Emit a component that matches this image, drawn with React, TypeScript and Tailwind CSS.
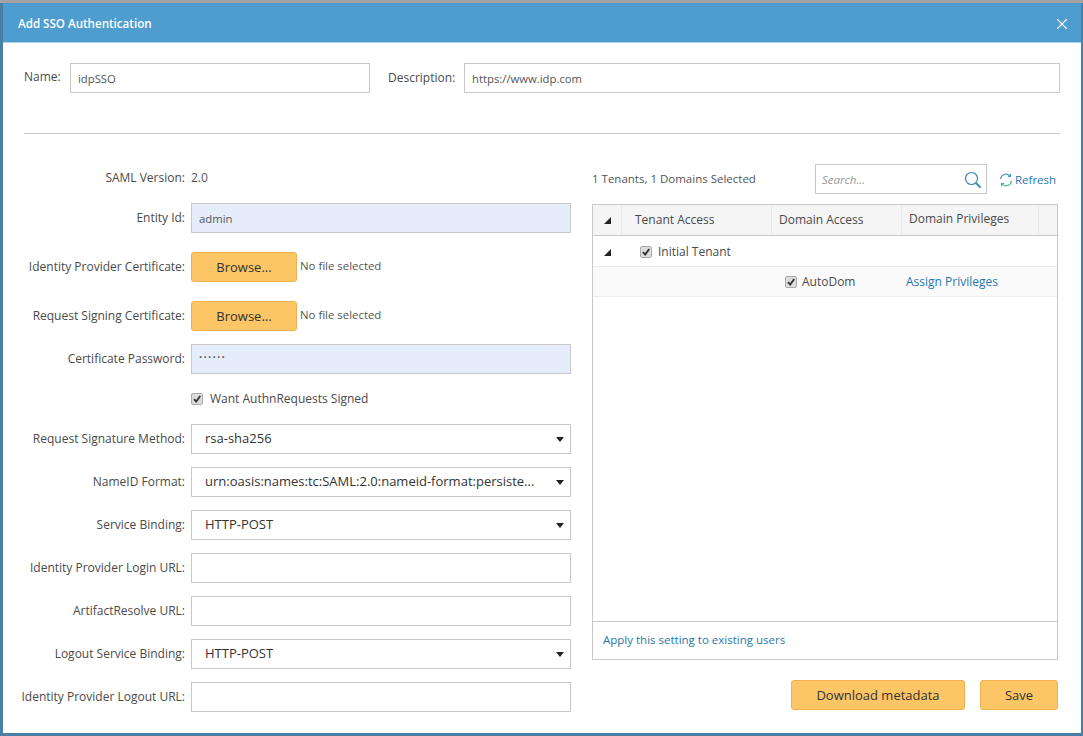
import { X } from 'lucide-react'

const font = { fontFamily: '"Open Sans", sans-serif' }

function Label({ children }: { children: string }) {
  return <label className="w-[188px] shrink-0 text-right pr-[6px] text-[12px] text-[#4a4a4a] whitespace-nowrap">{children}</label>
}

function TextRow({ label, value, filled, dots }: { label: string; value?: string; filled?: boolean; dots?: boolean }) {
  return (
    <div className="flex items-center h-[30px]">
      <Label>{label}</Label>
      <div className={`w-[380px] h-[30px] border border-[#c8c8c8] pl-[7px] flex items-center text-[#555] ${filled ? 'bg-[#e6edfa]' : 'bg-white'} ${dots ? 'text-[12px] font-semibold tracking-[1.2px] pb-[2px]' : 'text-[11.3px] pt-[2px]'}`}>
        {value}
      </div>
    </div>
  )
}

function SelectRow({ label, value }: { label: string; value: string }) {
  return (
    <div className="flex items-center h-[30px]">
      <Label>{label}</Label>
      <div className="w-[380px] h-[30px] border border-[#c8c8c8] bg-white pl-[13px] pr-[6px] flex items-center justify-between text-[13px] text-[#333]">
        <span className="whitespace-nowrap">{value}</span>
        <svg width="8" height="5" viewBox="0 0 8 5"><path d="M0 0h8L4 5z" fill="#222" /></svg>
      </div>
    </div>
  )
}

function FileRow({ label }: { label: string }) {
  return (
    <div className="flex items-center h-[30px]">
      <Label>{label}</Label>
      <Btn className="w-[106px]">Browse...</Btn>
      <span className="ml-[3px] -mt-[2px] text-[11.4px] text-[#555] whitespace-nowrap">No file selected</span>
    </div>
  )
}

function Btn({ children, className }: { children: string; className: string }) {
  return (
    <button className={`h-[30px] pt-[1px] rounded-[3px] border border-[#f0b050] bg-[#fcc566] text-[13px] text-[#333] ${className}`}>{children}</button>
  )
}

function Check() {
  return (
    <span className="w-[12px] h-[12px] rounded-[2px] border border-[#aaa] bg-[#dcdcdc] flex items-center justify-center shrink-0">
      <svg width="10" height="10" viewBox="0 0 10 10"><path d="M2 5.2l2.2 2.4L8.2 2" fill="none" stroke="#333" strokeWidth="1.9" /></svg>
    </span>
  )
}

function Corner() {
  return <svg width="7" height="7" viewBox="0 0 7 7"><path d="M7 0v7H0z" fill="#222" /></svg>
}

export default function App() {
  return (
    <div style={font} className="w-[1083px] h-[736px] overflow-hidden bg-[#a3a3a3] pt-[3px]">
      <div className="h-[733px] bg-white border-l-[3px] border-r-[2px] border-b-[3px] border-[#4a7fa5] flex flex-col">
        <div className="h-[40px] shrink-0 bg-[#4f9ccf] flex items-center justify-between pl-[15px] pr-[10px] pt-[2px] border-b border-[#a9d4ee]">
          <h1 className="text-[11.6px] font-semibold text-white">Add SSO Authentication</h1>
          <X className="w-[18px] h-[18px] text-white" strokeWidth={1.5} />
        </div>

        <div className="pl-[21px] pr-[21px] pt-[20px]">
          <div className="flex items-center h-[30px]">
            <span className="w-[46px] text-[12px] text-[#4a4a4a] -mt-[2px]">Name:</span>
            <div className="w-[300px] h-[30px] border border-[#c8c8c8] pl-[7px] pt-[2px] flex items-center text-[11.3px] text-[#555]">idpSSO</div>
            <span className="ml-[18px] w-[76px] text-[12px] text-[#4a4a4a]">Description:</span>
            <div className="flex-1 h-[30px] border border-[#c8c8c8] pl-[7px] pt-[2px] flex items-center text-[11.3px] text-[#555]">https://www.idp.com</div>
          </div>
          <div className="mt-[40px] border-t border-[#c8c8c8]" />
        </div>

        <div className="flex pt-[31px]">
          <div className="w-[568px] shrink-0 mr-[21px]">
            <div className="flex items-center h-[30px] -mt-[2px]">
              <Label>SAML Version:</Label>
              <span className="text-[12px] text-[#555]">2.0</span>
            </div>
            <div className="mt-[10px]"><TextRow label="Entity Id:" value="admin" filled /></div>
            <div className="mt-[19px]"><FileRow label="Identity Provider Certificate:" /></div>
            <div className="mt-[19px]"><FileRow label="Request Signing Certificate:" /></div>
            <div className="mt-[13px]"><TextRow label="Certificate Password:" value="······" filled dots /></div>
            <div className="flex items-center h-[20px] mt-[15px] pl-[188px]">
              <Check />
              <span className="ml-[7px] text-[12px] text-[#4a4a4a]">Want AuthnRequests Signed</span>
            </div>
            <div className="mt-[15px] flex flex-col gap-[13px]">
              <SelectRow label="Request Signature Method:" value="rsa-sha256" />
              <SelectRow label="NameID Format:" value="urn:oasis:names:tc:SAML:2.0:nameid-format:persiste..." />
              <SelectRow label="Service Binding:" value="HTTP-POST" />
              <TextRow label="Identity Provider Login URL:" />
              <TextRow label="ArtifactResolve URL:" />
              <SelectRow label="Logout Service Binding:" value="HTTP-POST" />
              <TextRow label="Identity Provider Logout URL:" />
            </div>
          </div>

          <div className="w-[466px] shrink-0">
            <div className="flex items-center h-[30px] -mt-[1px]">
              <span className="w-[223px] text-[11.5px] text-[#555] whitespace-nowrap">1 Tenants, 1 Domains Selected</span>
              <div className="w-[172px] h-[30px] border border-[#c8c8c8] pl-[6px] pr-[4px] pt-[2px] flex items-center justify-between">
                <span className="text-[11.5px] italic text-[#999]">Search...</span>
                <svg width="18" height="18" viewBox="0 0 18 18" fill="none">
                  <circle cx="7.5" cy="7.5" r="6" stroke="#3b87b8" strokeWidth="1.2" />
                  <path d="M12 12l4.6 4.6" stroke="#3b87b8" strokeWidth="2" />
                </svg>
              </div>
              <svg className="ml-[12px] mt-[2px] shrink-0" width="14" height="14" viewBox="0 0 14 14" fill="none">
                <path d="M1.5 6A5.5 5.5 0 0 1 11 3" stroke="#4b96c6" strokeWidth="1.1" />
                <path d="M12.5 8A5.5 5.5 0 0 1 3 11" stroke="#37b58a" strokeWidth="1.1" />
                <path d="M11.5 0.8V3.4H8.9" stroke="#4b96c6" strokeWidth="1.1" />
                <path d="M2.5 13.2V10.6H5.1" stroke="#37b58a" strokeWidth="1.1" />
              </svg>
              <span className="ml-[2px] mt-[2px] text-[11.5px] text-[#1f78ad]">Refresh</span>
            </div>

            <div className="mt-[10px] h-[456px] border border-[#c8c8c8] flex flex-col">
              <div className="flex h-[31px] shrink-0 bg-[#f5f5f5] border-b border-[#c8c8c8] text-[12px] text-[#4a4a4a]">
                <div className="w-[29px] flex items-center justify-center border-r border-[#e8e8e8]"><Corner /></div>
                <div className="w-[150px] pl-[13px] flex items-center border-r border-[#e8e8e8]">Tenant Access</div>
                <div className="w-[130px] pl-[7px] flex items-center border-r border-[#e8e8e8]">Domain Access</div>
                <div className="w-[137px] pl-[7px] pb-[2px] flex items-center border-r border-[#e8e8e8]">Domain Privileges</div>
                <div className="flex-1" />
              </div>
              <div className="flex items-center h-[31px] pt-[2px] shrink-0 border-b border-[#ececec] text-[12px] text-[#4a4a4a]">
                <div className="w-[29px] flex justify-center"><Corner /></div>
                <div className="pl-[18px] flex items-center gap-[6px]"><Check />Initial Tenant</div>
              </div>
              <div className="flex items-center h-[30px] shrink-0 bg-[#fafafa] border-b border-[#ececec] text-[12px] text-[#4a4a4a]">
                <div className="w-[179px]" />
                <div className="w-[130px] pl-[13px] flex items-center gap-[5px]"><Check />AutoDom</div>
                <a className="pl-[4px] text-[#1f78ad]">Assign Privileges</a>
              </div>
              <div className="flex-1" />
              <div className="h-[38px] shrink-0 border-t border-[#c8c8c8] pl-[10px] pb-[2px] flex items-center text-[11.5px] text-[#1f78ad]">
                Apply this setting to existing users
              </div>
            </div>

            <div className="mt-[20px] flex justify-end gap-[15px]">
              <Btn className="w-[174px]">Download metadata</Btn>
              <Btn className="w-[78px]">Save</Btn>
            </div>
          </div>
        </div>
      </div>
    </div>
  )
}
